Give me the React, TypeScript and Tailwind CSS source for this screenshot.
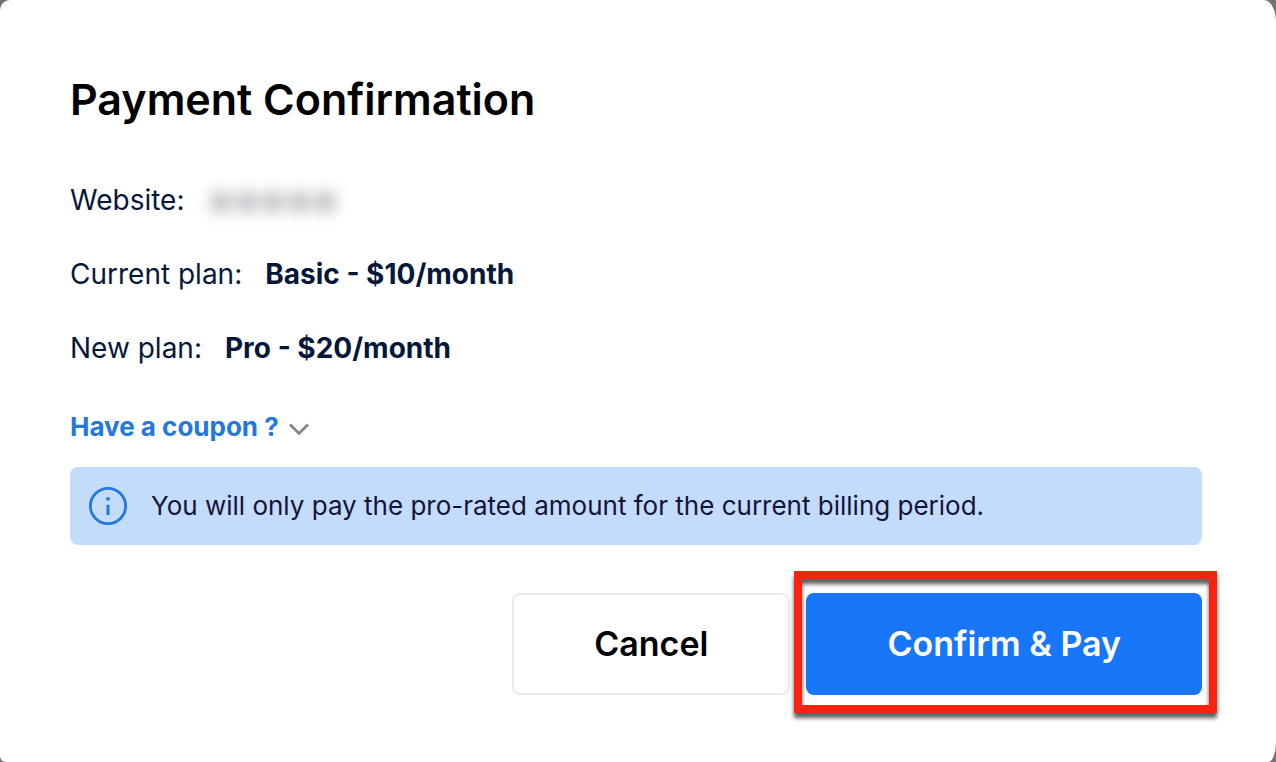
import { useState } from "react";

const plans = [
  { label: "Current plan:", value: "Basic - $10/month" },
  { label: "New plan:", value: "Pro - $20/month" },
];

function Chevron({ open }: { open: boolean }) {
  return (
    <svg
      viewBox="0 0 20 16"
      className={open ? "h-4 w-5 rotate-180" : "h-4 w-5"}
      fill="none"
      stroke="#858585"
      strokeWidth="2.8"
      aria-hidden="true"
    >
      <path d="M1 5.6 L10 14.4 L19 5.6" />
    </svg>
  );
}

function InfoIcon() {
  return (
    <svg viewBox="0 0 38 38" className="size-[38px] shrink-0" fill="none" aria-hidden="true">
      <circle cx="19" cy="19" r="17.6" stroke="#2277e0" strokeWidth="2.8" />
      <circle cx="19" cy="11.8" r="1.9" fill="#2277e0" />
      <path d="M19 17.8 V28" stroke="#2277e0" strokeWidth="3" />
    </svg>
  );
}

function MaskedSite() {
  return (
    <dd className="flex gap-2 pt-1 blur-[8px]" aria-label="Hidden website">
      {[0, 1, 2, 3, 4].map((dot) => (
        <span key={dot} className="size-[18px] rounded-sm bg-[#aeb0b6]" />
      ))}
    </dd>
  );
}

export default function App() {
  const [couponOpen, setCouponOpen] = useState(false);

  return (
    <div className="flex min-h-screen flex-col bg-[#737373] font-['Inter',sans-serif]">
      <main
        role="dialog"
        aria-labelledby="payment-title"
        className="flex-1 rounded-tl-[10px] rounded-tr-[12px_22px] rounded-br-[8px_20px] rounded-bl-[6px] bg-white pt-[67px] pr-[74px] pb-[67px] pl-[70px]"
      >
        <h1 id="payment-title" className="text-[43px] leading-[64px] font-semibold text-black">
          Payment Confirmation
        </h1>

        <dl className="mt-[49px] flex flex-col gap-[34px] text-[28px] leading-10 text-[#06183a]">
          <div className="flex items-center gap-7">
            <dt>Website:</dt>
            <MaskedSite />
          </div>
          {plans.map((plan) => (
            <div key={plan.label} className="flex items-center gap-[23px]">
              <dt>{plan.label}</dt>
              <dd className="font-bold">{plan.value}</dd>
            </div>
          ))}
        </dl>

        <button
          type="button"
          aria-expanded={couponOpen}
          onClick={() => setCouponOpen(!couponOpen)}
          className="mt-[41px] flex items-center gap-2.5 text-[26px] leading-9 font-bold text-[#2277e0]"
        >
          Have a coupon ?
          <Chevron open={couponOpen} />
        </button>

        <div className="mt-[22px] flex min-h-[78px] items-center gap-6 rounded-lg bg-[#c4dcfc] px-[19px] text-[26px] leading-9 text-[#14143a]">
          <InfoIcon />
          <p>You will only pay the pro-rated amount for the current billing period.</p>
        </div>

        <div className="mt-12 flex justify-end gap-4 text-[34px] leading-10 font-semibold">
          <button
            type="button"
            className="h-[102px] rounded-lg border-2 border-[#ebebeb] bg-white px-20 text-black"
          >
            Cancel
          </button>
          <div className="relative">
            <button type="button" className="h-[102px] rounded-lg bg-[#1877f8] px-[81px] text-white">
              Confirm &amp; Pay
            </button>
            <div className="pointer-events-none absolute -top-[22px] -right-[15px] -bottom-[18px] -left-3 border-8 border-[#fa2310] drop-shadow-[0_5px_2px_rgba(0,0,0,0.65)]" />
          </div>
        </div>
      </main>
    </div>
  );
}
